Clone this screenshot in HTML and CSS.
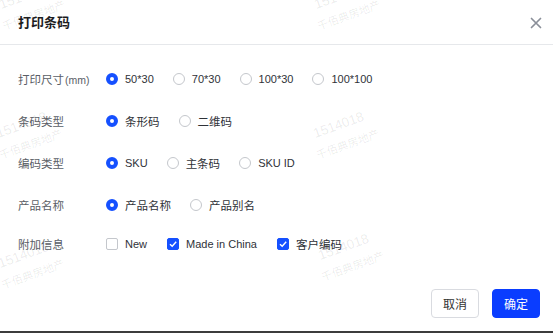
FILE: index.html
```html
<!DOCTYPE html>
<html>
<head>
<meta charset="utf-8">
<link rel="stylesheet" href="styles.css">
</head>
<body>
<div class="dialog">
  <div class="header">
    <div class="title">打印条码</div>
    <svg class="close" width="12" height="12" viewBox="0 0 12 12"><path d="M1.5 1.5 L10.5 10.5 M10.5 1.5 L1.5 10.5" stroke="#8a8f99" stroke-width="1.7" stroke-linecap="round"/></svg>
  </div>
  <div class="form">
    <div class="row">
      <div class="label">打印尺寸<span class="unit">(mm)</span></div>
      <div class="options">
        <span class="opt en"><span class="radio on"></span>50*30</span>
        <span class="opt en"><span class="radio"></span>70*30</span>
        <span class="opt en"><span class="radio"></span>100*30</span>
        <span class="opt en"><span class="radio"></span>100*100</span>
      </div>
    </div>
    <div class="row">
      <div class="label">条码类型</div>
      <div class="options">
        <span class="opt"><span class="radio on"></span>条形码</span>
        <span class="opt"><span class="radio"></span>二维码</span>
      </div>
    </div>
    <div class="row">
      <div class="label">编码类型</div>
      <div class="options">
        <span class="opt en"><span class="radio on"></span>SKU</span>
        <span class="opt"><span class="radio"></span>主条码</span>
        <span class="opt en"><span class="radio"></span>SKU ID</span>
      </div>
    </div>
    <div class="row">
      <div class="label">产品名称</div>
      <div class="options">
        <span class="opt"><span class="radio on"></span>产品名称</span>
        <span class="opt"><span class="radio"></span>产品别名</span>
      </div>
    </div>
    <div class="row">
      <div class="label">附加信息</div>
      <div class="options checks">
        <span class="opt en"><span class="check"></span>New</span>
        <span class="opt en"><span class="check on"><svg width="10" height="10" viewBox="0 0 10 10"><path d="M2 5.2 L4.2 7.3 L8.2 2.8" fill="none" stroke="#fff" stroke-width="1.4"/></svg></span>Made in China</span>
        <span class="opt"><span class="check on"><svg width="10" height="10" viewBox="0 0 10 10"><path d="M2 5.2 L4.2 7.3 L8.2 2.8" fill="none" stroke="#fff" stroke-width="1.4"/></svg></span>客户编码</span>
      </div>
    </div>
  </div>
  <div class="footer">
    <button class="btn">取消</button>
    <button class="btn primary">确定</button>
  </div>
  <div class="wm-layer">
    <div class="wm w1"><div class="n">1514018</div><div>千佰典房地产</div></div>
    <div class="wm w2"><div class="n">1514018</div><div>千佰典房地产</div></div>
    <div class="wm w3"><div class="n">1514018</div><div>千佰典房地产</div></div>
    <div class="wm w4"><div class="n">1514018</div><div>千佰典房地产</div></div>
    <div class="wm w5"><div class="n">1514018</div><div>千佰典房地产</div></div>
    <div class="wm w6"><div class="n">1514018</div><div>千佰典房地产</div></div>
  </div>
</div>
</body>
</html>
```
FILE: styles.css
```css
html, body {
  margin: 0;
  padding: 0;
  background: #fff;
}
body {
  width: 553px;
  height: 333px;
  overflow: hidden;
  font-family: "Liberation Sans", "Noto Sans CJK SC", sans-serif;
}
.dialog {
  position: relative;
  width: 553px;
  height: 331px;
  border-bottom: 2px solid #3c3c3c;
  display: flex;
  flex-direction: column;
  overflow: hidden;
}
.header {
  height: 45px;
  box-sizing: border-box;
  border-bottom: 1px solid #e6e8eb;
  display: flex;
  align-items: center;
  justify-content: space-between;
  padding: 0 11px 0 18px;
}
.title {
  font-family: "Noto Sans CJK SC", sans-serif;
  font-size: 13px;
  font-weight: 700;
  color: #1d1d1f;
  margin-top: -1px;
}
.close {
  display: block;
  margin-top: 2px;
}
.form {
  padding: 24px 0 0 18px;
  display: flex;
  flex-direction: column;
  gap: 22px;
}
.row {
  display: flex;
  align-items: center;
  height: 20px;
}
.row:last-child { margin-top: -3px; }
.label {
  width: 88px;
  font-family: "Noto Sans CJK SC", sans-serif;
  font-size: 11.5px;
  color: #5a5e66;
}
.unit {
  font-family: "Liberation Sans", sans-serif;
  font-size: 10.5px;
  margin-left: 1px;
}
.options {
  display: flex;
  align-items: center;
  gap: 19px;
}
.options.checks { gap: 20px; }
.opt {
  display: flex;
  align-items: center;
  font-family: "Noto Sans CJK SC", sans-serif;
  font-size: 11.5px;
  color: #2f3238;
}
.opt.en {
  font-family: "Liberation Sans", "Noto Sans CJK SC", sans-serif;
  font-size: 11px;
}
.radio {
  width: 12px;
  height: 12px;
  box-sizing: border-box;
  border: 1px solid #c4c7cc;
  border-radius: 50%;
  margin-right: 7px;
  background: #fff;
}
.radio.on {
  border: 4px solid #1550ff;
  background: #fff;
}
.check {
  width: 12px;
  height: 12px;
  box-sizing: border-box;
  border: 1px solid #c4c7cc;
  border-radius: 2px;
  margin-right: 7px;
  display: flex;
  align-items: center;
  justify-content: center;
}
.check.on {
  background: #1550ff;
  border-color: #1550ff;
}
.check svg { display: block; }
.footer {
  margin-top: auto;
  display: flex;
  justify-content: flex-end;
  gap: 13px;
  padding: 0 13px 13px 0;
}
.btn {
  width: 48px;
  height: 29px;
  box-sizing: border-box;
  border-radius: 4px;
  border: 1px solid #d9dbe0;
  background: #fff;
  font-family: "Noto Sans CJK SC", sans-serif;
  font-size: 12px;
  color: #333;
  padding: 0;
}
.btn.primary {
  background: #0a3dff;
  border-color: #0a3dff;
  color: #fff;
}
.wm-layer {
  position: absolute;
  inset: 0;
  pointer-events: none;
}
.wm {
  position: absolute;
  width: 80px;
  font-family: "Noto Sans CJK SC", sans-serif;
  font-size: 11px;
  line-height: 20px;
  color: rgba(0, 0, 0, 0.085);
  transform: translate(-50%, -50%) rotate(-20deg);
  text-align: center;
  white-space: nowrap;
}
.wm .n {
  font-family: "Liberation Sans", sans-serif;
  font-size: 13.5px;
  margin-left: -4px;
}
.w1 { left: 30px; top: 5px; }
.w2 { left: 345px; top: 5px; }
.w3 { left: 27px; top: 134px; }
.w4 { left: 344px; top: 134px; }
.w5 { left: 29px; top: 264px; }
.w6 { left: 349px; top: 256px; }
```
